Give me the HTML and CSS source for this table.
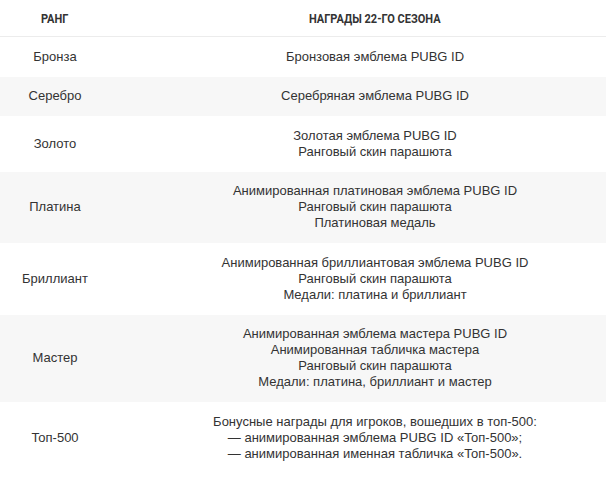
FILE: index.html
```html
<!DOCTYPE html>
<html lang="ru">
<head>
<meta charset="utf-8">
<link rel="stylesheet" href="styles.css">
</head>
<body>
<table class="rewards">
  <thead>
    <tr>
      <th class="col-rank"><span class="cond">РАНГ</span></th>
      <th class="col-reward"><span class="cond">НАГРАДЫ 22-ГО СЕЗОНА</span></th>
    </tr>
  </thead>
  <tbody>
    <tr>
      <td class="col-rank">Бронза</td>
      <td class="col-reward">Бронзовая эмблема PUBG ID</td>
    </tr>
    <tr>
      <td class="col-rank">Серебро</td>
      <td class="col-reward">Серебряная эмблема PUBG ID</td>
    </tr>
    <tr>
      <td class="col-rank">Золото</td>
      <td class="col-reward">Золотая эмблема PUBG ID<br>Ранговый скин парашюта</td>
    </tr>
    <tr>
      <td class="col-rank">Платина</td>
      <td class="col-reward">Анимированная платиновая эмблема PUBG ID<br>Ранговый скин парашюта<br>Платиновая медаль</td>
    </tr>
    <tr>
      <td class="col-rank">Бриллиант</td>
      <td class="col-reward">Анимированная бриллиантовая эмблема PUBG ID<br>Ранговый скин парашюта<br>Медали: платина и бриллиант</td>
    </tr>
    <tr>
      <td class="col-rank">Мастер</td>
      <td class="col-reward">Анимированная эмблема мастера PUBG ID<br>Анимированная табличка мастера<br>Ранговый скин парашюта<br>Медали: платина, бриллиант и мастер</td>
    </tr>
    <tr>
      <td class="col-rank">Топ-500</td>
      <td class="col-reward">Бонусные награды для игроков, вошедших в топ-500:<br>— анимированная эмблема PUBG ID «Топ-500»;<br>— анимированная именная табличка «Топ-500».</td>
    </tr>
  </tbody>
</table>
</body>
</html>
```

FILE: styles.css
```css
html, body {
  margin: 0;
  padding: 0;
  background: #ffffff;
}

body {
  font-family: "Liberation Sans", Arial, sans-serif;
  font-size: 13px;
  color: #333333;
}

.rewards {
  width: 100%;
  table-layout: fixed;
  border-collapse: collapse;
}

.rewards th {
  height: 36px;
  padding: 0;
  border-bottom: 1px solid #ececec;
  font-family: "Roboto", "Liberation Sans", sans-serif;
  font-weight: 700;
  font-size: 12.5px;
  color: #333333;
  text-align: center;
  vertical-align: middle;
}

.cond {
  display: inline-block;
  transform: scaleX(0.88);
  transform-origin: center;
  white-space: nowrap;
}

.rewards td {
  padding: 11.75px 0;
  line-height: 16px;
  text-align: center;
  vertical-align: middle;
}

.rewards tbody tr:nth-child(even) td {
  background: #f7f7f7;
}

.col-rank {
  width: 110px;
}

.rewards .col-reward {
  padding-left: 34px;
}
```
